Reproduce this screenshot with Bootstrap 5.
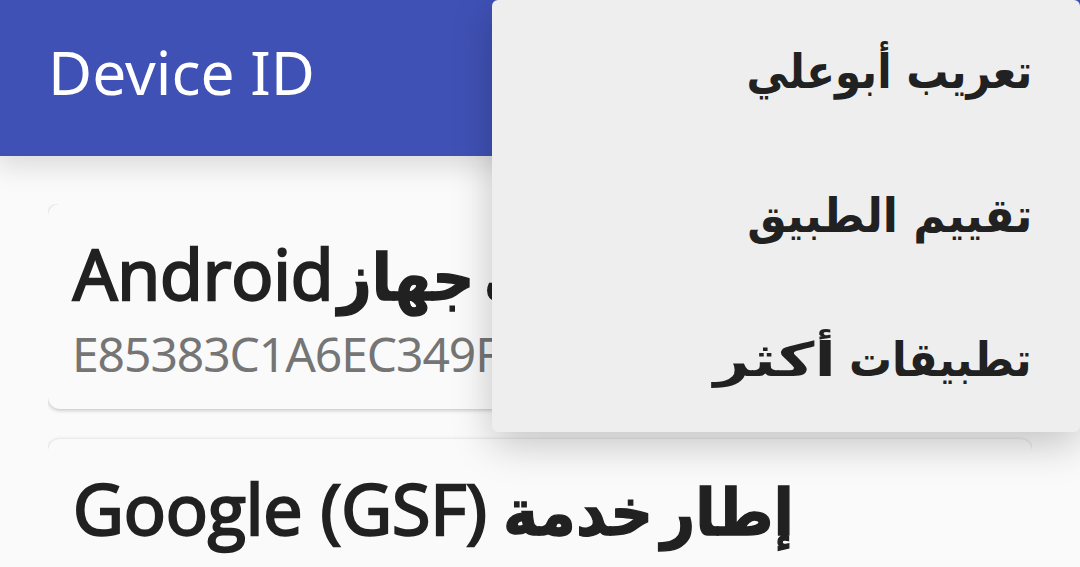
<!DOCTYPE html>
<html lang="ar">
<head>
  <meta charset="UTF-8" />
  <meta name="viewport" content="width=device-width,initial-scale=1" />
  <title>Device ID</title>
  <!-- Bootstrap CSS -->
  <link href="https://cdn.jsdelivr.net/npm/bootstrap@5.3.0/dist/css/bootstrap.min.css" rel="stylesheet" />
  <style>
    body {
      background: #fafafa;
      color: #212121;
      font-family: "Noto Sans", "DejaVu Sans", sans-serif;
      height: 567px;
      overflow: hidden;
    }
    .app-bar {
      background: #3f51b5;
      height: 156px;
      padding: 0 48px 11px;
      box-shadow: 0 6px 26px 4px rgba(0,0,0,0.13);
    }
    .app-title {
      color: #fff;
      font-size: 60.5px;
      line-height: 1;
    }
    .id-list {
      padding: 48px 48px 0;
      gap: 30px;
      min-height: 0;
    }
    .id-card {
      background: #fafafa;
      border: 0;
      border-radius: 12px;
      height: 205px;
      padding: 29px 24px 0;
      box-shadow: 0 1px 4px rgba(0,0,0,0.25);
    }
    /* shadow is cut at the left and right edges */
    .id-card-first {
      clip-path: inset(0 0 -8px 0);
    }
    .id-card-next {
      height: 129px;
      padding-top: 29px;
      border-radius: 12px 12px 0 0;
      clip-path: inset(-5px 0 0 0);
    }
    .id-name {
      font-family: "Open Sans", "Noto Sans", sans-serif;
      font-size: 70px;
      font-weight: 400;
      -webkit-text-stroke: 2.4px #212121;
      letter-spacing: -0.1px;
      line-height: 80px;
      padding-left: 1px;
      white-space: nowrap;
    }
    .id-value {
      color: #757575;
      font-size: 48px;
      letter-spacing: -1.07px;
      line-height: 71px;
      white-space: nowrap;
    }
    .ar-text {
      font-family: "DejaVu Sans", sans-serif;
      font-weight: 700;
      letter-spacing: 0;
    }
    .id-name .ar-text {
      display: inline-block;
      font-size: 65px;
      -webkit-text-stroke: 1.4px #212121;
      transform: scaleX(0.9);
      transform-origin: left;
      word-spacing: -12px;
      margin-left: 4px;
    }
    .id-card-next .id-name .ar-text {
      transform: scaleX(0.915);
      word-spacing: -14px;
      margin-left: -2px;
    }
    .overflow-menu {
      background: #eee;
      border-radius: 6px;
      width: 588px;
      height: 432px;
      box-shadow: 0 12px 40px rgba(0,0,0,0.22);
    }
    .menu-entry {
      height: 144px;
      padding: 0 48px 2px;
      font-size: 47px;
      line-height: 1;
    }
    .menu-entry span {
      display: inline-block;
      transform-origin: right;
    }
    .fit-a { transform: scaleX(0.895); }
    .fit-b { transform: scaleX(0.94); }
    .fit-c { transform: scaleX(0.91); }
    .fit-d { transform: translateX(21px) scaleX(1.33); }
  </style>
</head>
<body class="d-flex flex-column">
  <nav class="app-bar d-flex align-items-center flex-shrink-0">
    <h1 class="app-title m-0 fw-normal">Device ID</h1>
  </nav>
  <main class="id-list d-flex flex-column flex-grow-1">
    <section class="card id-card id-card-first flex-shrink-0">
      <div class="id-name">Android<span class="ar-text" dir="rtl">معرف جهاز</span></div>
      <div class="id-value">E85383C1A6EC349F</div>
    </section>
    <section class="card id-card id-card-next flex-shrink-0">
      <div class="id-name">Google (GSF) <span class="ar-text" dir="rtl">إطار خدمة</span></div>
    </section>
  </main>
  <div class="overflow-menu position-absolute top-0 end-0" dir="rtl">
    <div class="menu-entry ar-text d-flex align-items-center"><span class="fit-a">تعريب أبوعلي</span></div>
    <div class="menu-entry ar-text d-flex align-items-center"><span class="fit-b">تقييم الطبيق</span></div>
    <div class="menu-entry ar-text d-flex align-items-center"><div><span class="fit-c">تطبيقات</span> <span class="fit-d">أكثر</span></div></div>
  </div>
  <script src="https://cdn.jsdelivr.net/npm/bootstrap@5.3.0/dist/js/bootstrap.bundle.min.js"></script>
</body>
</html>
